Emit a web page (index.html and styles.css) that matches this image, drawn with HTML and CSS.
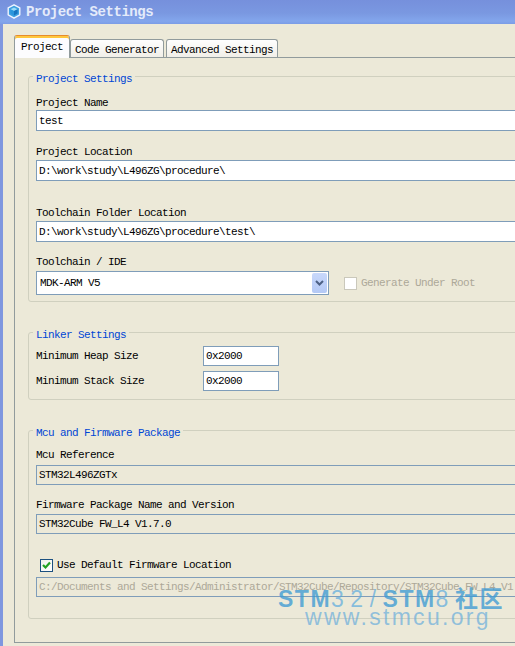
FILE: index.html
```html
<!doctype html>
<html lang="en">
<head>
	<meta charset="UTF-8">
	<title>Project Settings</title>
	<link rel="stylesheet" href="styles.css">
</head>
<body>
	<div class="window">
		<div class="titlebar">
			<svg class="appicon" width="14" height="15" viewBox="0 0 14 15">
				<path d="M7 0.8 L12.8 3.8 L12.8 10.8 L7 14.2 L1.2 10.8 L1.2 3.8 Z" fill="#3d9fe0" stroke="#eef4ff" stroke-width="1.4" stroke-linejoin="round"/>
				<path d="M7 3.4 L10.6 5.2 L7 7 L3.4 5.2 Z" fill="#9bdcf8"/>
				<path d="M3.4 5.2 L7 7 L7 11.4 L3.4 9.4 Z" fill="#2b95dc"/>
				<path d="M10.6 5.2 L7 7 L7 11.4 L10.6 9.4 Z" fill="#1774c0"/>
			</svg>
			<span class="title">Project Settings</span>
		</div>

		<div class="frame">
			<ul class="tabs">
				<li class="on">Project</li>
				<li>Code Generator</li>
				<li class="last">Advanced Settings</li>
			</ul>

			<div class="panel">
				<!-- project settings -->
				<div class="group group1">
					<div class="legend">Project Settings</div>
					<div class="label first">Project Name</div>
					<div class="input tall">test</div>
					<div class="label">Project Location</div>
					<div class="input tall near">D:\work\study\L496ZG\procedure\</div>
					<div class="label far">Toolchain Folder Location</div>
					<div class="input tall near">D:\work\study\L496ZG\procedure\test\</div>
					<div class="label ide">Toolchain / IDE</div>
					<div class="ide-row">
						<div class="select">
							<span class="select-text">MDK-ARM V5</span>
							<span class="select-btn">
								<svg width="9" height="6" viewBox="0 0 9 6"><path d="M1 1 L4.5 4.5 L8 1" fill="none" stroke="#4d6185" stroke-width="2"/></svg>
							</span>
						</div>
						<span class="check disabled"></span>
						<span class="check-label disabled-text">Generate Under Root</span>
					</div>
				</div>

				<!-- linker -->
				<div class="group group2">
					<div class="legend">Linker Settings</div>
					<div class="row first-row">
						<span class="row-label">Minimum Heap Size</span>
						<div class="input small">0x2000</div>
					</div>
					<div class="row">
						<span class="row-label">Minimum Stack Size</span>
						<div class="input small">0x2000</div>
					</div>
				</div>

				<!-- mcu / firmware -->
				<div class="group group3">
					<div class="legend">Mcu and Firmware Package</div>
					<div class="label mcu">Mcu Reference</div>
					<div class="input readonly mcu-in">STM32L496ZGTx</div>
					<div class="label fw">Firmware Package Name and Version</div>
					<div class="input readonly fw-in">STM32Cube FW_L4 V1.7.0</div>
					<div class="check-row">
						<span class="check checked">
							<svg width="11" height="11" viewBox="0 0 11 11"><path d="M2 5 L4.5 7.5 L9 2.5" fill="none" stroke="#21a121" stroke-width="2.2"/></svg>
						</span>
						<span class="check-label">Use Default Firmware Location</span>
					</div>
					<div class="input readonly dim">C:/Documents and Settings/Administrator/STM32Cube/Repository/STM32Cube_FW_L4_V1.7.0</div>
				</div>
			</div>
		</div>

		<div class="watermark">
			<div class="wm-top"><b>STM</b><span class="thin">32/</span><b>STM</b><span class="thin">8</span><b>社区</b></div>
			<div class="wm-url">www.stmcu.org</div>
		</div>
	</div>
</body>
</html>
```

FILE: styles.css
```css
html,body{margin:0;padding:0;}
body{background:#ece9d8;overflow:hidden;font-family:"Liberation Mono","Noto Sans CJK SC",monospace;font-size:11px;letter-spacing:-0.6px;color:#000;}
ul,li{margin:0;padding:0;list-style:none;}

.window{position:relative;width:640px;height:646px;}

/* title bar */
.titlebar{height:24px;display:flex;align-items:center;background:linear-gradient(#7690dc 0%,#7a98e1 55%,#83a6ec 88%,#7b9ce6 100%);}
.appicon{margin-left:7px;margin-top:-1px;}
.title{margin-left:5px;font-size:14px;font-weight:bold;letter-spacing:-0.45px;color:#e4ebfa;line-height:24px;}

.frame{border-left:3px solid #7f97df;padding:11px 0 0 11px;height:611px;}

/* tabs */
.tabs{display:flex;align-items:flex-end;position:relative;z-index:1;}
.tabs li{height:18px;box-sizing:border-box;padding:3px 4px 0 4px;line-height:14px;border:1px solid #919b9c;border-bottom:none;border-radius:3px 3px 0 0;background:linear-gradient(#fefefe,#f1efe8);}
.tabs li.on{height:23px;margin-bottom:-1px;padding:4px 6px 0 6px;background:#fcfcfe;border-top:1px solid #e68b2c;box-shadow:inset 0 2px 0 #ffc73c;}
.tabs li.last{margin-left:2px;}

.panel{box-sizing:border-box;height:586px;border:1px solid #919b9c;padding:18px 0 0 13px;background:#ece9d8;}

/* titled groups */
.group{border:1px solid #d0d0bf;border-radius:3px;padding:0 0 0 7px;}
.legend{margin:-5px 0 0 -3px;display:table;padding:0 3px;height:14px;line-height:14px;background:#ece9d8;color:#0046d5;}
.group1{height:226px;box-sizing:border-box;}
.group2{margin-top:30px;height:68px;box-sizing:border-box;}
.group3{margin-top:30px;height:189px;box-sizing:border-box;}

.label{height:14px;line-height:14px;margin-top:14px;}
.label.first{margin-top:10px;}
.label.far{margin-top:25px;}
.label.ide{margin-top:13px;}
.label.mcu{margin-top:8px;}
.label.fw{margin-top:13px;}

.input{box-sizing:border-box;height:20px;line-height:19px;border:1px solid #7f9db9;background:#fff;padding-left:2px;white-space:nowrap;overflow:hidden;}
.input.tall{height:21px;line-height:21px;}
.input.near{margin-top:1px;}
.input.readonly{background:#ece9d8;}
.mcu-in{margin-top:3px;}
.fw-in{margin-top:2px;}
.input.dim{margin-top:5px;color:#aca899;}

.ide-row{display:flex;align-items:center;margin-top:2px;}
.select{box-sizing:border-box;width:293px;height:24px;border:1px solid #7f9db9;background:#fff;display:flex;}
.select-text{flex:1;line-height:23px;padding-left:3px;}
.select-btn{width:15px;margin:1px;border-radius:2px;background:linear-gradient(#c8d8fb,#b4c9f5);display:flex;align-items:center;justify-content:center;}

.check{box-sizing:border-box;width:13px;height:13px;border:1px solid #1c5180;background:#fff;display:flex;align-items:center;justify-content:center;}
.check.disabled{margin-left:15px;border-color:#cac8bb;}
.check-label{margin-left:4px;}
.disabled-text{color:#aca899;}

.row{display:flex;align-items:center;margin-top:5px;}
.row.first-row{margin-top:4px;}
.row-label{width:167px;}
.input.small{width:76px;}

.check-row{display:flex;align-items:center;height:14px;margin-top:24px;padding-left:4px;}
.check.checked{background:linear-gradient(135deg,#f0f0ea,#fff);}

/* watermark over the lower right corner */
.watermark{position:absolute;left:278px;top:588px;font-family:"Liberation Sans","Noto Sans CJK SC",sans-serif;letter-spacing:0;}
.wm-top{height:23px;line-height:23px;font-size:23px;white-space:nowrap;color:rgba(62,155,212,0.78);}
.wm-top b{letter-spacing:1.5px;}
.wm-top .thin{font-weight:normal;letter-spacing:6.5px;color:rgba(90,170,222,0.7);}
.wm-url{margin-top:-6px;padding-left:27px;line-height:24px;font-size:23px;letter-spacing:2.3px;color:rgba(110,175,220,0.72);}
```
